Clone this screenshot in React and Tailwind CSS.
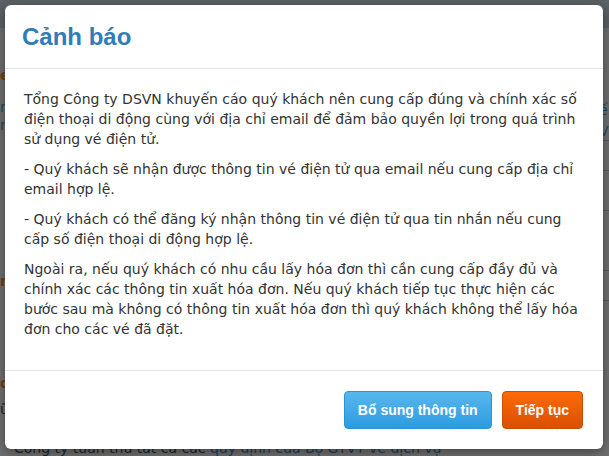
export default function App() {
  return (
    <div className="relative h-[456px] w-[609px] overflow-hidden bg-[#6f6f6f] font-['DejaVu_Sans',sans-serif]">
      {/* dimmed page behind the dialog */}
      <div className="h-[28px] bg-[#5c6165]" />
      <div className="flex">
        <div className="w-[10px] pt-[38px] text-[14px] leading-[18px]">
          <div className="font-bold text-[#7a3a10]">é</div>
          <div className="mt-[14px] text-[#1f4a6a]">ri</div>
          <div className="text-[#1f4a6a]">rá</div>
          <div className="mt-[138px] font-bold text-[#7a3a10]">r</div>
          <div className="mt-[84px] font-bold text-[#7a3a10]">o</div>
          <div className="mt-[8px] text-[#222]">ữ</div>
        </div>
        <div className="flex-1" />
        <div className="w-[10px] pt-[72px]">
          <div className="h-[40px] text-[14px] text-[#1f4a6a]">ế V</div>
          <div className="h-[30px] border-t border-[#5a5a5a]" />
          <div className="h-[40px] border-t border-[#5a5a5a]" />
          <div className="h-[60px] border-t border-[#5a5a5a]" />
          <div className="h-[30px] border-t border-[#5a5a5a]" />
          <div className="h-[40px] border-t border-[#5a5a5a]" />
        </div>
      </div>
      <div className="absolute bottom-0 left-[14px] whitespace-nowrap text-[14px] leading-[16px] text-[#1c2630]">
        Công ty tuân thủ tất cả các <span className="text-[#1a3f5e]">quy định của Bộ GTVT về dịch vụ</span>
      </div>

      {/* dialog */}
      <div className="absolute left-[5px] top-[5px] w-[598px] rounded-[6px] bg-white shadow-[0_3px_12px_rgba(0,0,0,0.4)]">
        <div className="flex h-[64px] items-center border-b border-[#e5e5e5] px-[17px]">
          <h4 className="font-['Liberation_Sans',Arial,sans-serif] text-[24px] font-bold text-[#2f7db8]">
            Cảnh báo
          </h4>
        </div>

        <div className="px-[19px] pt-[20px] pb-[21px] text-[14px] leading-[20px] text-[#333]">
          <p className="mb-[10px]">
            Tổng Công ty DSVN khuyến cáo quý khách nên cung cấp đúng và chính xác số
            điện thoại di động cùng với địa chỉ email để đảm bảo quyền lợi trong quá trình
            sử dụng vé điện tử.
          </p>
          <p className="mb-[10px]">
            - Quý khách sẽ nhận được thông tin vé điện tử qua email nếu cung cấp địa chỉ
            email hợp lệ.
          </p>
          <p className="mb-[10px]">
            - Quý khách có thể đăng ký nhận thông tin vé điện tử qua tin nhắn nếu cung
            cấp số điện thoại di động hợp lệ.
          </p>
          <p className="mb-[10px]">
            Ngoài ra, nếu quý khách có nhu cầu lấy hóa đơn thì cần cung cấp đầy đủ và
            chính xác các thông tin xuất hóa đơn. Nếu quý khách tiếp tục thực hiện các
            bước sau mà không có thông tin xuất hóa đơn thì quý khách không thể lấy hóa
            đơn cho các vé đã đặt.
          </p>
        </div>

        <div className="flex justify-end gap-[10px] border-t border-[#e5e5e5] p-[20px] font-['Liberation_Sans',Arial,sans-serif]">
          <button className="h-[38px] rounded-[4px] border border-[#2a92d6] bg-gradient-to-b from-[#58b7ee] to-[#2a9be0] px-[13px] text-[14px] font-bold text-white">
            Bổ sung thông tin
          </button>
          <button className="h-[38px] rounded-[4px] border border-[#c94f00] bg-gradient-to-b from-[#ff6a08] to-[#d94f00] px-[13px] text-[14px] font-bold text-white">
            Tiếp tục
          </button>
        </div>
      </div>
    </div>
  );
}
